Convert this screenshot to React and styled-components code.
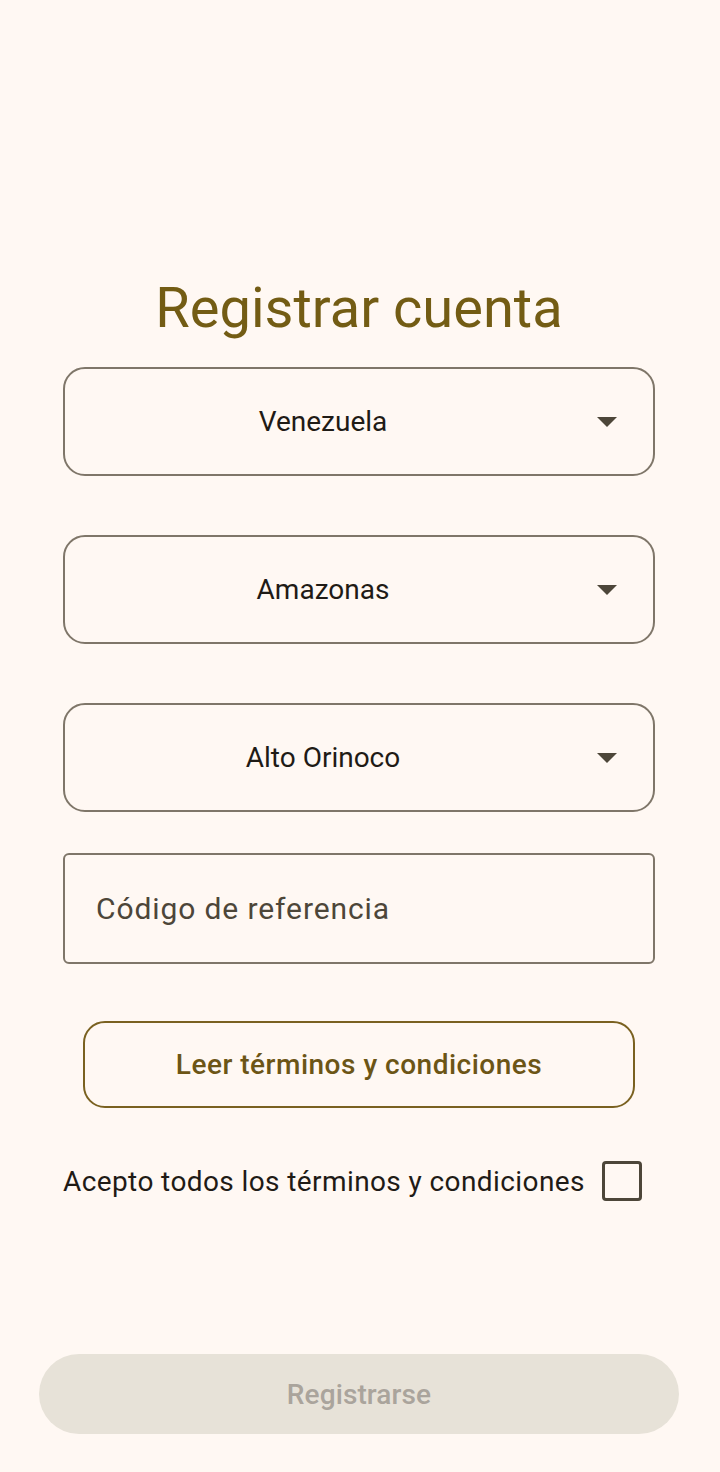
import React from 'react';
import styled, { createGlobalStyle } from 'styled-components';

const GlobalStyle = createGlobalStyle`
  html, body {
    margin: 0;
    padding: 0;
    background: #fff8f3;
  }
  body {
    font-family: Roboto, "Noto Sans", sans-serif;
  }
`;

const Screen = styled.div`
  min-height: 1472px;
  box-sizing: border-box;
  display: flex;
  flex-direction: column;
  align-items: center;
  padding: 273px 2px 38px 0;
  background: #fff8f3;
`;

const Form = styled.div`
  width: 592px;
  display: flex;
  flex-direction: column;
`;

const Title = styled.h1`
  margin: 0 0 24px;
  color: #735c14;
  font-size: 56px;
  line-height: 70px;
  font-weight: 400;
  text-align: center;
`;

const Select = styled.div`
  height: 109px;
  box-sizing: border-box;
  border: 2px solid #7f7669;
  border-radius: 22px;
  display: flex;
  align-items: center;
  margin-bottom: ${(p) => p.$gap}px;
`;

const SelectValue = styled.span`
  flex: 1;
  padding-left: 28px;
  text-align: center;
  color: #1f1b16;
  font-size: 28px;
`;

const ArrowBox = styled.span`
  width: 42px;
  height: 42px;
  margin: 0 25px 0 33px;
  display: flex;
  align-items: center;
  justify-content: center;
`;

const TextField = styled.div`
  height: 111px;
  box-sizing: border-box;
  border: 2px solid #7f7669;
  border-radius: 6px;
  display: flex;
  align-items: center;
  padding-left: 31px;
  color: #4d4639;
  font-size: 30px;
  letter-spacing: 0.9px;
  margin-bottom: 57px;
`;

const OutlineButton = styled.button`
  align-self: center;
  width: 552px;
  height: 87px;
  box-sizing: border-box;
  border: 2px solid #7a6120;
  border-radius: 22px;
  background: transparent;
  color: #6c5516;
  font-family: Roboto, sans-serif;
  font-size: 28px;
  font-weight: 500;
  letter-spacing: 0.5px;
`;

const CheckRow = styled.label`
  display: flex;
  align-items: center;
  margin-top: 53px;
  color: #1f1b16;
  font-size: 28px;
  letter-spacing: 0.4px;
`;

const Box = styled.span`
  width: 40px;
  height: 40px;
  box-sizing: border-box;
  border: 3.5px solid #4d4639;
  border-radius: 4px;
  margin-left: 17px;
`;

const SubmitButton = styled.button`
  margin-top: auto;
  width: 640px;
  height: 80px;
  border: none;
  border-radius: 40px;
  background: #e7e2d8;
  color: #aaa49c;
  font-family: Roboto, sans-serif;
  font-size: 28px;
  font-weight: 500;
  letter-spacing: 0.1px;
`;

const Arrow = () => (
  <svg width="20" height="10" viewBox="0 0 20 10">
    <path d="M0 0h20L10 10z" fill="#4d4639" />
  </svg>
);

const selects = ['Venezuela', 'Amazonas', 'Alto Orinoco'];

const App = () => (
  <>
    <GlobalStyle />
    <Screen>
      <Form>
        <Title>Registrar cuenta</Title>
        {selects.map((s, i) => (
          <Select key={s} $gap={i < 2 ? 59 : 41}>
            <SelectValue>{s}</SelectValue>
            <ArrowBox><Arrow /></ArrowBox>
          </Select>
        ))}
        <TextField>Código de referencia</TextField>
        <OutlineButton type="button">Leer términos y condiciones</OutlineButton>
        <CheckRow>
          Acepto todos los términos y condiciones
          <Box />
        </CheckRow>
      </Form>
      <SubmitButton type="button" disabled>Registrarse</SubmitButton>
    </Screen>
  </>
);

export default App;
